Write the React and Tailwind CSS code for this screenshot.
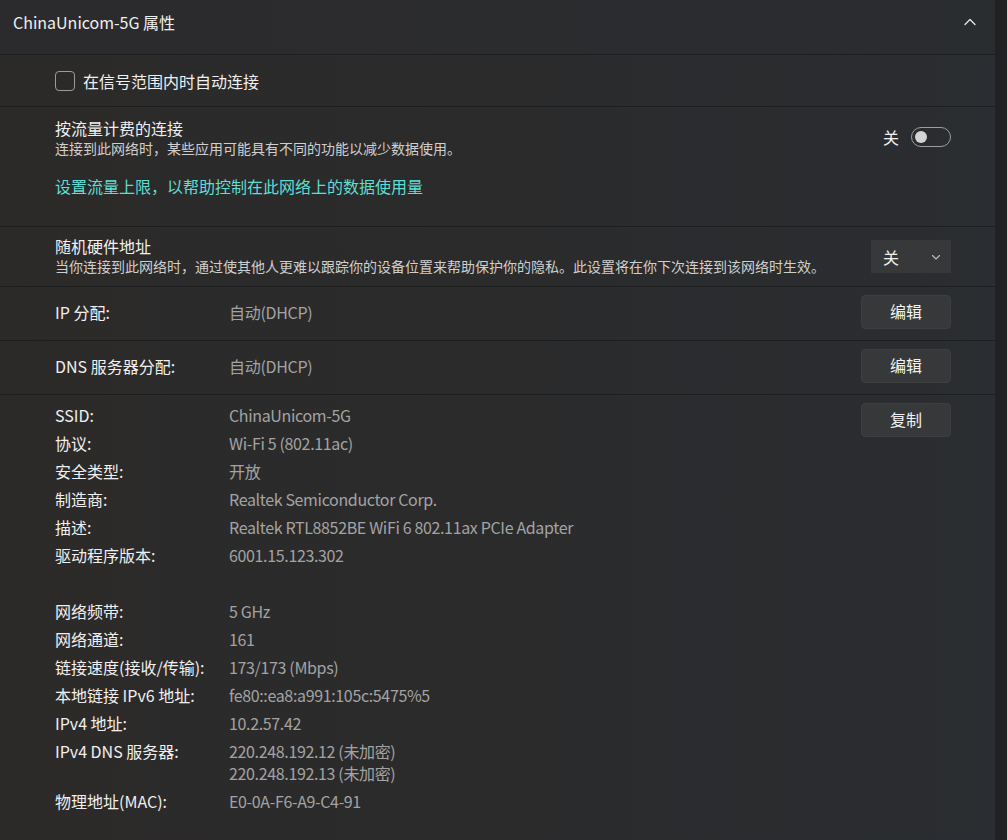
import React from "react";

const FONT = { fontFamily: '"Noto Sans CJK SC", "Noto Sans", sans-serif' };

const Divider = () => <div className="h-px bg-[#1d1e1f]" />;

const ChevronUp = () => (
  <svg width="14" height="14" viewBox="0 0 14 14" fill="none">
    <path d="M2 9.5 L7 4.5 L12 9.5" stroke="#e6e6e6" strokeWidth="1.3" strokeLinecap="round" strokeLinejoin="round" />
  </svg>
);

const ChevronDown = () => (
  <svg width="10" height="10" viewBox="0 0 10 10" fill="none">
    <path d="M1.5 3.5 L5 7 L8.5 3.5" stroke="#bdbdbd" strokeWidth="1.1" strokeLinecap="round" strokeLinejoin="round" />
  </svg>
);

const ActionButton = ({ children }) => (
  <button className="w-[90px] h-[34px] rounded-[4px] bg-[#37383a] border border-[#3d3e40] text-[16px] leading-none text-[#f2f2f2] flex items-center justify-center pb-[2px]">
    {children}
  </button>
);

const details = [
  ["SSID:", "ChinaUnicom-5G"],
  ["协议:", "Wi-Fi 5 (802.11ac)"],
  ["安全类型:", "开放"],
  ["制造商:", "Realtek Semiconductor Corp."],
  ["描述:", "Realtek RTL8852BE WiFi 6 802.11ax PCIe Adapter"],
  ["驱动程序版本:", "6001.15.123.302"],
  null,
  ["网络频带:", "5 GHz"],
  ["网络通道:", "161"],
  ["链接速度(接收/传输):", "173/173 (Mbps)"],
  ["本地链接 IPv6 地址:", "fe80::ea8:a991:105c:5475%5"],
  ["IPv4 地址:", "10.2.57.42"],
  ["IPv4 DNS 服务器:", ["220.248.192.12 (未加密)", "220.248.192.13 (未加密)"]],
  ["物理地址(MAC):", "E0-0A-F6-A9-C4-91"],
];

const App = () => {
  return (
    <div style={FONT} className="w-[1007px] h-[840px] overflow-hidden flex bg-[#1f2123] text-[#f0f0f0] select-none">
      <div className="w-[995px] h-full flex flex-col bg-gradient-to-r from-[#2c2a29] via-[#2b2b2c] to-[#2a2d31]">
        {/* Header */}
        <div className="h-[54px] flex items-center justify-between pl-[13px] pr-[18px] pb-[10px] bg-[#2c2d30]/60">
          <span className="text-[16px] leading-none text-[#f0f0f0]">ChinaUnicom-5G 属性</span>
          <ChevronUp />
        </div>
        <Divider />

        {/* Auto connect */}
        <div className="h-[51px] flex items-center pl-[55px]">
          <div className="w-[20px] h-[20px] rounded-[4px] border border-[#9b9b9b] mr-[8px]" />
          <span className="text-[16px] leading-none">在信号范围内时自动连接</span>
        </div>
        <Divider />

        {/* Metered connection */}
        <div className="h-[119px] flex pl-[55px] pr-[44px]">
          <div className="flex-1 pt-[11px]">
            <div className="text-[16px] leading-[20px]">按流量计费的连接</div>
            <div className="text-[14px] leading-[20px] text-[#cfcfcf]">连接到此网络时，某些应用可能具有不同的功能以减少数据使用。</div>
            <div className="mt-[17px] text-[16px] leading-[22px] text-[#5ddfd3]">设置流量上限，以帮助控制在此网络上的数据使用量</div>
          </div>
          <div className="pt-[20px] flex items-start gap-[12px]">
            <span className="text-[16px] leading-[20px]">关</span>
            <div className="w-[40px] h-[20px] rounded-full border border-[#9d9d9d] flex items-center pl-[3px]">
              <div className="w-[12px] h-[12px] rounded-full bg-[#d4d4d4]" />
            </div>
          </div>
        </div>
        <Divider />

        {/* Random hardware address */}
        <div className="h-[59px] flex items-center pl-[55px] pr-[44px]">
          <div className="flex-1 pb-[1px]">
            <div className="text-[16px] leading-[20px]">随机硬件地址</div>
            <div className="text-[14px] leading-[20px] text-[#cfcfcf]">当你连接到此网络时，通过使其他人更难以跟踪你的设备位置来帮助保护你的隐私。此设置将在你下次连接到该网络时生效。</div>
          </div>
          <div className="w-[80px] h-[33px] bg-[#373839] flex items-center justify-between pl-[12px] pr-[10px]">
            <span className="text-[16px] leading-none">关</span>
            <ChevronDown />
          </div>
        </div>
        <Divider />

        {/* IP assignment */}
        <div className="h-[53px] flex items-center pl-[55px] pr-[44px] pb-[3px]">
          <span className="w-[174px] text-[16px] leading-none">IP 分配:</span>
          <span className="flex-1 text-[16px] leading-none text-[#a3a3a3] tracking-[-0.3px]">自动(DHCP)</span>
          <ActionButton>编辑</ActionButton>
        </div>
        <Divider />

        {/* DNS assignment */}
        <div className="h-[53px] flex items-center pl-[55px] pr-[44px] pb-[3px]">
          <span className="w-[174px] text-[16px] leading-none">DNS 服务器分配:</span>
          <span className="flex-1 text-[16px] leading-none text-[#a3a3a3] tracking-[-0.3px]">自动(DHCP)</span>
          <ActionButton>编辑</ActionButton>
        </div>
        <Divider />

        {/* Details */}
        <div className="flex-1 flex pl-[55px] pr-[44px] pt-[6px]">
          <div className="flex-1 flex flex-col">
            {details.map((row, i) =>
              row === null ? (
                <div key={i} className="h-[28px]" />
              ) : (
                <div key={i} className="flex text-[16px]">
                  <span className="w-[174px] leading-[28px]">{row[0]}</span>
                  {Array.isArray(row[1]) ? (
                    <div className="flex flex-col text-[#a3a3a3] tracking-[-0.35px] pt-[3px] pb-[3px]">
                      {row[1].map((v) => (
                        <span key={v} className="leading-[22px]">{v}</span>
                      ))}
                    </div>
                  ) : (
                    <span className="leading-[28px] text-[#a3a3a3] tracking-[-0.35px]">{row[1]}</span>
                  )}
                </div>
              )
            )}
          </div>
          <div className="pt-[2px]">
            <ActionButton>复制</ActionButton>
          </div>
        </div>
      </div>
    </div>
  );
};

export default App;
